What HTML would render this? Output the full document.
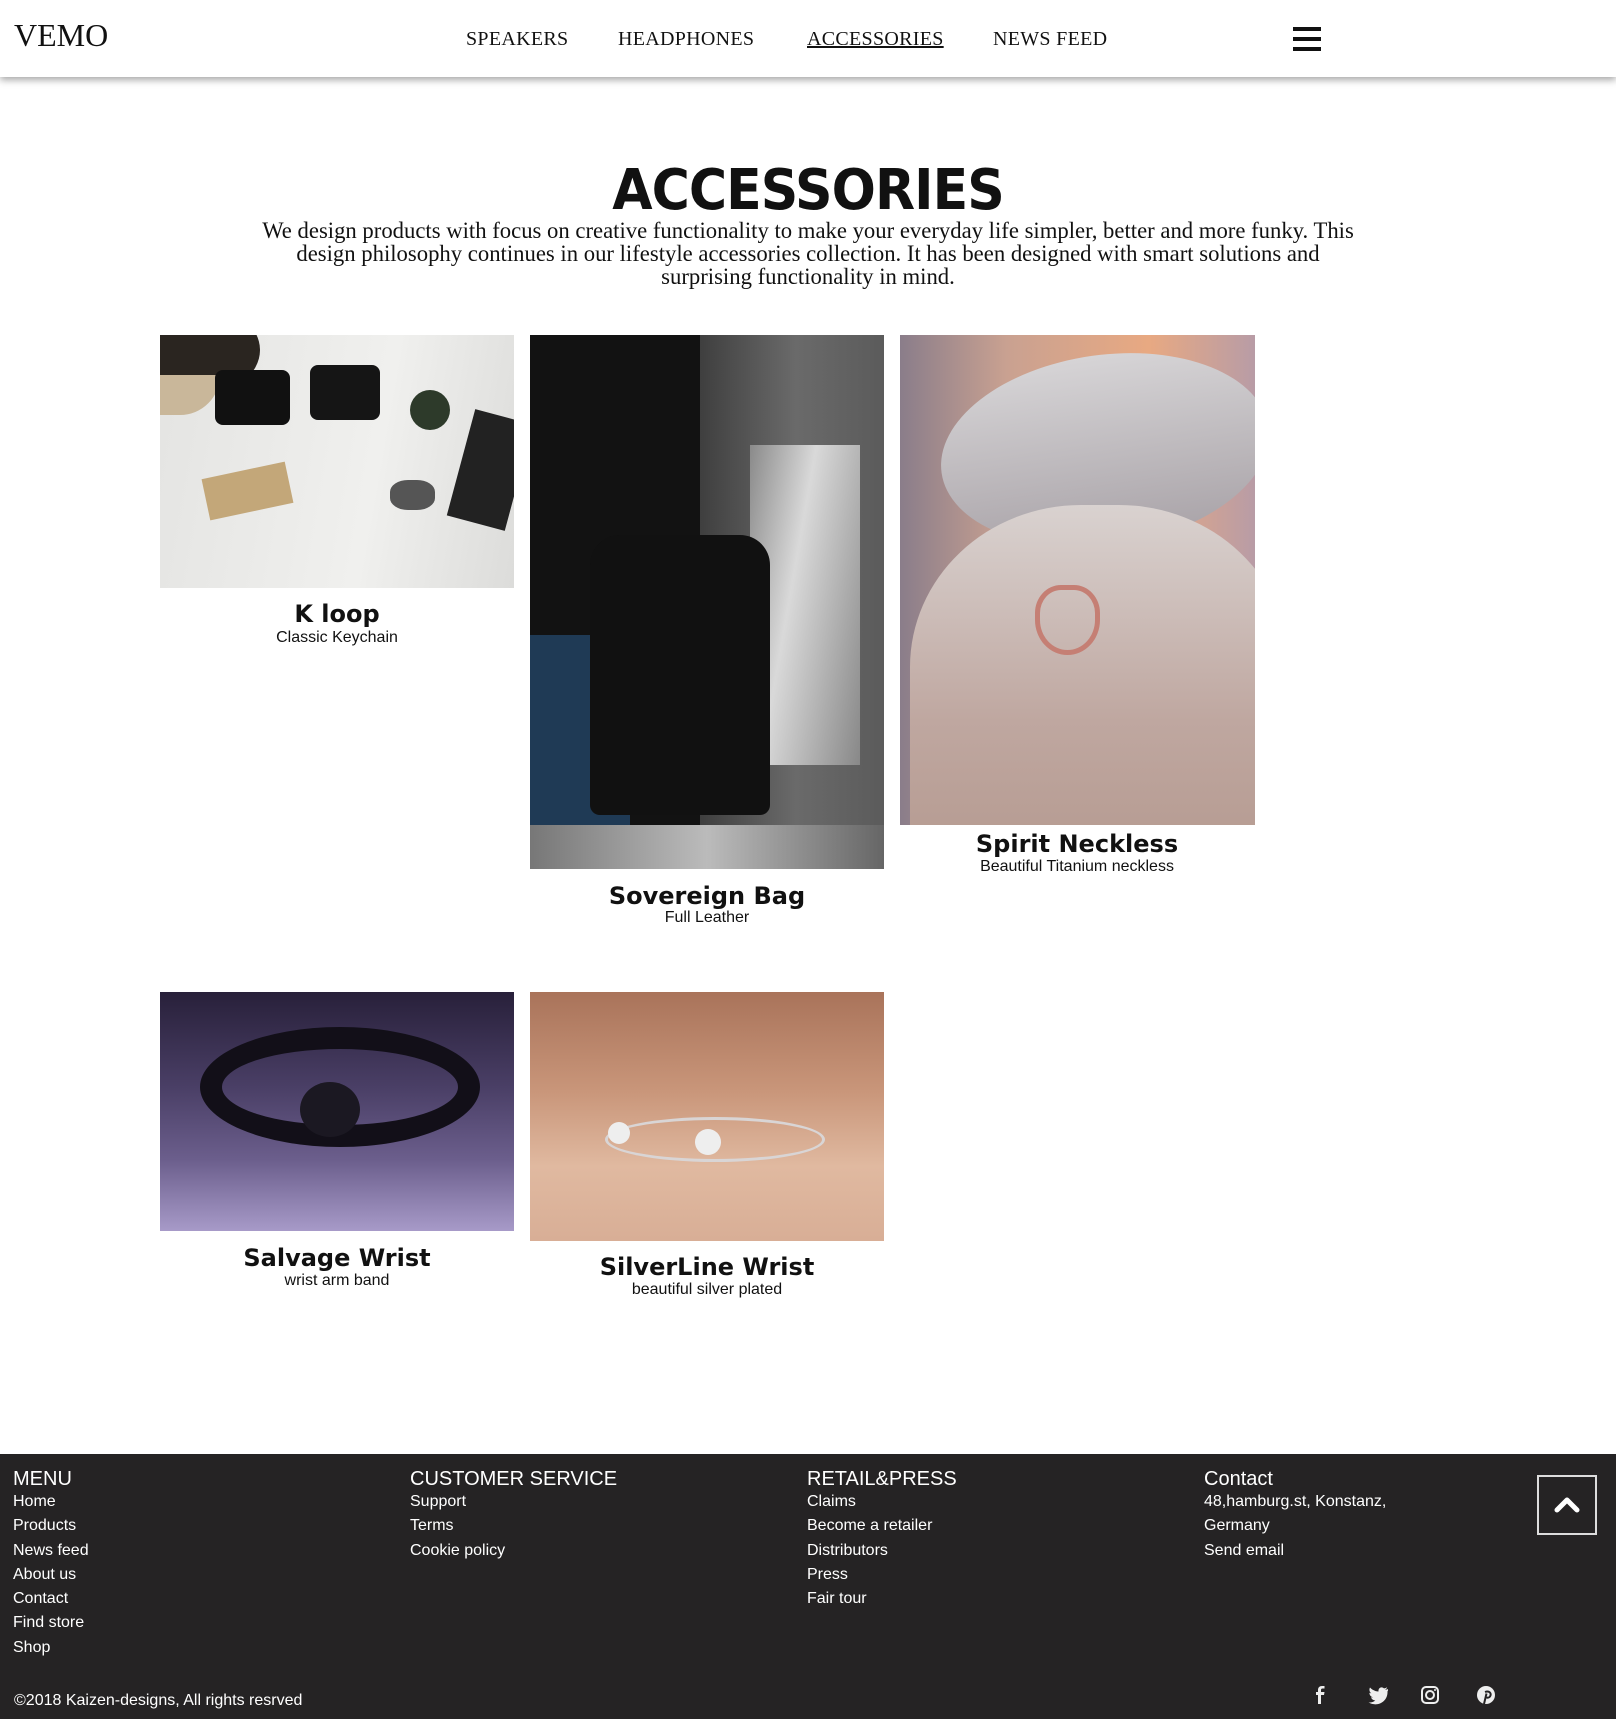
<!DOCTYPE html>
<html><head><meta charset="utf-8"><style>
*{margin:0;padding:0;box-sizing:border-box}
body{width:1616px;height:1719px;position:relative;background:#fff;overflow:hidden;font-family:"Liberation Sans",Arial,sans-serif}
.a{position:absolute}
header{position:absolute;left:0;top:0;width:1616px;height:77px;background:#fff;box-shadow:0 3px 7px rgba(0,0,0,.35);z-index:2}
.logo{left:14px;top:17px;font:32px "Liberation Serif",serif;color:#111}
.nav{top:28px;font:20px "Liberation Serif",serif;color:#111;letter-spacing:.3px}
.burger span{position:absolute;left:0;width:28px;height:4px;background:#111}
h1{position:absolute;left:0;width:1616px;top:158px;text-align:center;font:bold 56px "DejaVu Sans",sans-serif;letter-spacing:-1px;color:#111;transform:scaleX(.93)}
.p{left:240px;width:1136px;top:219px;text-align:center;font:22.7px/23px "Liberation Serif",serif;color:#111}
.img{position:absolute;overflow:hidden}
.t{position:absolute;text-align:center;font:bold 24px "DejaVu Sans",sans-serif;color:#111;width:354px}
.s{position:absolute;text-align:center;font:16px "Liberation Sans",sans-serif;color:#111;width:354px}
footer{position:absolute;left:0;top:1454px;width:1616px;height:265px;background:#252324;color:#fff}
.col{position:absolute;top:14px;font:16px/24.3px "Liberation Sans",sans-serif}
.col b{display:block;font-weight:normal;font-size:20px;line-height:22px}
</style></head><body>
<header>
<div class="a logo">VEMO</div>
<div class="a nav" style="left:466px">SPEAKERS</div>
<div class="a nav" style="left:618px">HEADPHONES</div>
<div class="a nav" style="left:807px;text-decoration:underline">ACCESSORIES</div>
<div class="a nav" style="left:993px">NEWS FEED</div>
<div class="a burger" style="left:1293px;top:27px;width:28px;height:24px"><span style="top:0"></span><span style="top:10px"></span><span style="top:20px"></span></div>
</header>
<h1>ACCESSORIES</h1>
<div class="a p">We design products with focus on creative functionality to make your everyday life simpler, better and more funky. This design philosophy continues in our lifestyle accessories collection. It has been designed with smart solutions and<br>surprising functionality in mind.</div>

<div class="img" style="left:160px;top:335px;width:354px;height:253px;background:linear-gradient(100deg,#e4e4e2,#f0f0ee 60%,#dcdcda)">
<div class="a" style="left:-20px;top:-30px;width:120px;height:90px;border-radius:50%;background:#2a2520"></div>
<div class="a" style="left:0;top:40px;width:60px;height:40px;background:#c9b79a;border-radius:0 0 40px 0"></div>
<div class="a" style="left:55px;top:35px;width:75px;height:55px;background:#111;border-radius:8px"></div>
<div class="a" style="left:150px;top:30px;width:70px;height:55px;background:#151515;border-radius:8px"></div>
<div class="a" style="left:250px;top:55px;width:40px;height:40px;background:#2d3a2a;border-radius:50%"></div>
<div class="a" style="left:300px;top:80px;width:60px;height:110px;background:#222;transform:rotate(15deg)"></div>
<div class="a" style="left:45px;top:135px;width:85px;height:42px;background:#c3a779;transform:rotate(-12deg)"></div>
<div class="a" style="left:230px;top:145px;width:45px;height:30px;background:#555;border-radius:40%"></div>
</div>
<div class="t" style="left:160px;top:600px">K loop</div>
<div class="s" style="left:160px;top:629px">Classic Keychain</div>

<div class="img" style="left:530px;top:335px;width:354px;height:534px;background:linear-gradient(90deg,#1b1b1b,#3a3a3a 45%,#6a6a6a 75%,#5b5b5b)">
<div class="a" style="left:0;top:0;width:170px;height:534px;background:#121212"></div>
<div class="a" style="left:220px;top:110px;width:110px;height:320px;background:linear-gradient(100deg,#8a8a8a,#d9d9d9 40%,#888)"></div>
<div class="a" style="left:0;top:300px;width:100px;height:190px;background:#1f3a55"></div>
<div class="a" style="left:60px;top:200px;width:180px;height:280px;background:#111;border-radius:30px 30px 10px 10px"></div>
<div class="a" style="left:0;top:490px;width:354px;height:44px;background:linear-gradient(90deg,#777,#bbb,#666)"></div>
</div>
<div class="t" style="left:530px;top:882px">Sovereign Bag</div>
<div class="s" style="left:530px;top:909px">Full Leather</div>

<div class="img" style="left:900px;top:335px;width:355px;height:490px;background:linear-gradient(90deg,#8a7d8a,#c9a191 30%,#e8a982 70%,#b89ca6)">
<div class="a" style="left:40px;top:20px;width:330px;height:190px;border-radius:50%;background:linear-gradient(#d6d4d6,#a9a3a8);transform:rotate(-8deg)"></div>
<div class="a" style="left:10px;top:170px;width:380px;height:360px;border-radius:45% 45% 0 0;background:linear-gradient(#d9d2d0,#bfa7a0 60%,#b59a90)"></div>
<div class="a" style="left:135px;top:250px;width:65px;height:70px;border:5px solid #c57f74;border-radius:40% 40% 50% 50%"></div>
</div>
<div class="t" style="left:900px;top:830px">Spirit Neckless</div>
<div class="s" style="left:900px;top:858px">Beautiful Titanium neckless</div>

<div class="img" style="left:160px;top:992px;width:354px;height:239px;background:linear-gradient(180deg,#28203a,#4a3f66 40%,#6b5e8c 70%,#a79ac8)">
<div class="a" style="left:40px;top:35px;width:280px;height:120px;border:22px solid #120f18;border-radius:50%"></div>
<div class="a" style="left:140px;top:90px;width:60px;height:55px;background:#1b1822;border-radius:50%"></div>
</div>
<div class="t" style="left:160px;top:1244px">Salvage Wrist</div>
<div class="s" style="left:160px;top:1272px">wrist arm band</div>

<div class="img" style="left:530px;top:992px;width:354px;height:249px;background:linear-gradient(180deg,#a9735a,#c9967a 40%,#e0b9a0 70%,#d8ae96)">
<div class="a" style="left:75px;top:125px;width:220px;height:45px;border:3px solid #d9d5d5;border-radius:50%"></div>
<div class="a" style="left:78px;top:130px;width:22px;height:22px;background:#eee;border-radius:50%"></div>
<div class="a" style="left:165px;top:137px;width:26px;height:26px;background:#eee;border-radius:50%"></div>
</div>
<div class="t" style="left:530px;top:1253px">SilverLine Wrist</div>
<div class="s" style="left:530px;top:1281px">beautiful silver plated</div>

<footer>
<div class="col" style="left:13px"><b>MENU</b>Home<br>Products<br>News feed<br>About us<br>Contact<br>Find store<br>Shop</div>
<div class="col" style="left:410px"><b>CUSTOMER SERVICE</b>Support<br>Terms<br>Cookie policy</div>
<div class="col" style="left:807px"><b>RETAIL&amp;PRESS</b>Claims<br>Become a retailer<br>Distributors<br>Press<br>Fair tour</div>
<div class="col" style="left:1204px"><b>Contact</b>48,hamburg.st, Konstanz,<br>Germany<br>Send email</div>
<div class="a" style="left:1537px;top:21px;width:60px;height:60px;border:2px solid #ddd"><svg width="56" height="56" viewBox="0 0 56 56"><path d="M18 33 L28 23 L38 33" stroke="#fff" stroke-width="5" fill="none" stroke-linecap="round" stroke-linejoin="round"/></svg></div>
<div class="a" style="left:14px;top:238px;font-size:16px">©2018 Kaizen-designs, All rights resrved</div>
<svg class="a" style="left:1310px;top:230px" width="190" height="22" viewBox="0 0 190 22">
<path d="M11 20 V11 H14 L14.5 8 H11 V6 C11 5 11.5 4.5 12.5 4.5 H14.5 V2 H12 C9.5 2 8 3.5 8 6 V8 H6 V11 H8 V20Z" fill="#eee"/>
<path d="M78 5 C77 5.5 76 5.7 75 5.8 C76 5.2 76.8 4.3 77.2 3.2 C76.2 3.8 75.2 4.2 74 4.4 C72 2.3 68 3.5 68.5 7.5 C64.5 7.3 62 5.5 60 3.5 C58.8 5.6 59.5 8 61.3 9.2 C60.6 9.2 60 9 59.4 8.7 C59.4 11 61 12.8 63 13.2 C62.3 13.4 61.7 13.4 61 13.3 C61.6 15.2 63.3 16.4 65.3 16.5 C63.4 18 61 18.7 58.6 18.4 C67 23.5 78 18 77.5 7.3 C78.3 6.6 78 5.5 78 5Z" fill="#eee"/>
<rect x="112" y="3" width="16" height="16" rx="4" stroke="#eee" stroke-width="2" fill="none"/><circle cx="120" cy="11" r="4" stroke="#eee" stroke-width="2" fill="none"/><circle cx="125" cy="6" r="1" fill="#eee"/>
<circle cx="176" cy="11" r="9" fill="#eee"/><path d="M175 8 C179 6.5 182 9 180 12.5 C179 14 177 14 176.5 13 M176.5 9.5 L174 20" stroke="#252324" stroke-width="2" fill="none"/>
</svg>
</footer>
</body></html>
